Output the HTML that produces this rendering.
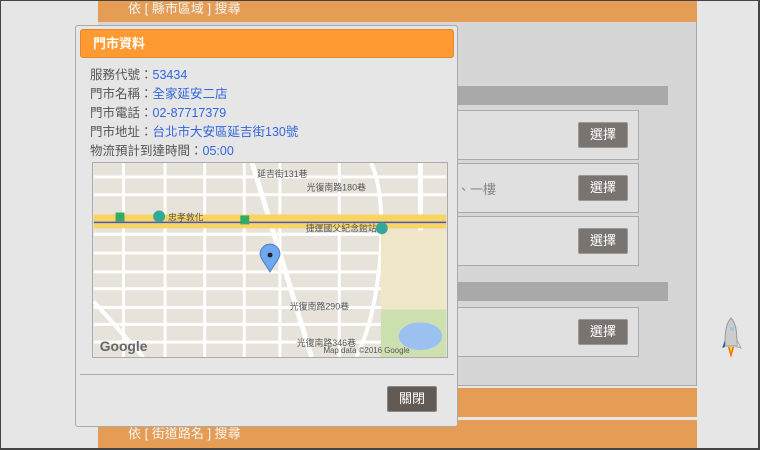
<!DOCTYPE html>
<html><head><meta charset="utf-8"><style>
*{margin:0;padding:0;box-sizing:border-box}
body{width:760px;height:450px;overflow:hidden;background:#e6e6e6;font-family:"Liberation Sans","Noto Sans CJK TC",sans-serif;position:relative}
.frame{position:absolute;left:0;top:0;width:760px;height:450px;border:1px solid #444;border-right-width:2px;border-bottom-width:2px;z-index:20;pointer-events:none}
.a{position:absolute}
.main{left:98px;top:0;width:599px;height:386px;background:#d6d6d6;border-right:1px solid #aaa;border-bottom:1px solid #aaa}
.ob{background:#e59d55;color:#f4f4f4;font-size:13px;padding-left:30px;line-height:20px;white-space:pre}
.gb{background:#a9a9a9;height:19px;left:457px;width:211px}
.row{left:440px;width:199px;height:50px;background:#e0e0e0;border:1px solid #aaa}
.btn{background:#79746f;color:#fff;font-size:13px;text-align:center;line-height:24px;border-radius:2px;border:1px solid #999;width:50px;height:26px;left:578px}
.modal{left:75px;top:25px;width:383px;height:402px;background:#e6e6e6;border:1px solid #aaa;border-radius:3px}
.mh{left:4px;top:3px;width:374px;height:29px;background:#ff9a33;border:1px solid #e08a30;border-radius:3px;color:#fff;font-weight:bold;font-size:13px;line-height:28px;padding-left:12px}
.info{left:14px;top:40px;font-size:12.5px;color:#555;line-height:19px}
.info b{font-weight:normal;color:#3366dd}
</style></head><body>
<div class="a main"></div>
<div class="a ob" style="left:98px;top:0;width:599px;height:22px;line-height:18px">依 [ 縣市區域 ] 搜尋</div>
<div class="a gb" style="top:86px"></div>
<div class="a row" style="top:110px"></div>
<div class="a row" style="top:163px"><span class="a" style="left:16px;top:15px;font-size:13px;color:#888">、一樓</span></div>
<div class="a row" style="top:216px"></div>
<div class="a gb" style="top:282px"></div>
<div class="a row" style="top:307px"></div>
<div class="a btn" style="top:122px">選擇</div>
<div class="a btn" style="top:175px">選擇</div>
<div class="a btn" style="top:228px">選擇</div>
<div class="a btn" style="top:319px">選擇</div>
<div class="a ob" style="left:98px;top:388px;width:599px;height:29px"></div>
<div class="a ob" style="left:98px;top:420px;width:599px;height:30px;line-height:28px">依 [ 街道路名 ] 搜尋</div>
<svg class="a" style="left:720px;top:316px" width="22" height="48" viewBox="0 0 22 48"><path d="M11 2 C6 8 5 14 5 30 L17 30 C17 14 16 8 11 2Z" fill="#ccc" stroke="#999"/><circle cx="12" cy="13" r="2" fill="#9cd"/><path d="M5 24 L2 32 L5 31Z" fill="#3366aa"/><path d="M17 24 L21 32 L17 31Z" fill="#ddd" stroke="#aaa"/><path d="M8 31 L11 42 L14 31Z" fill="#f60"/><path d="M9.5 31 L11 37 L12.5 31Z" fill="#fd0"/></svg>
<div class="a modal">
<div class="a mh">門市資料</div>
<div class="a info">服務代號：<b>53434</b><br>門市名稱：<b>全家延安二店</b><br>門市電話：<b>02-87717379</b><br>門市地址：<b>台北市大安區延吉街130號</b><br>物流預計到達時間：<b>05:00</b></div>
<svg class="a" style="left:16px;top:136px;border:1px solid #aaa" width="356" height="196" viewBox="0 0 356 196">
<rect width="356" height="196" fill="#e8e3da"/>
<g stroke="#fff" stroke-width="3" fill="none">
<path d="M0 14H356M0 32H356M0 72H356M0 91H356M0 110H356M0 127H356M0 146H356M0 163H356M0 181H356"/>
<path d="M30 0V196M72 0V196M112 0V196M152 0V196M188 0V196M248 0V196"/>
<path d="M330 0V196" stroke-width="5"/>
<path d="M160 0L220 196" stroke-width="5"/>
<path d="M280 0C300 40 290 150 265 196" stroke-width="4"/>
<path d="M0 140L50 196" stroke-width="4"/>
</g>
<rect x="290" y="68" width="66" height="80" fill="#f0e6c8"/>
<rect x="290" y="148" width="66" height="48" fill="#cde0b0"/>
<ellipse cx="330" cy="175" rx="22" ry="14" fill="#9cc0f0"/>
<rect x="0" y="52" width="356" height="14" fill="#f8d462"/>
<line x1="0" y1="60" x2="356" y2="60" stroke="#4455cc" stroke-width="1.5"/>
<circle cx="66" cy="54" r="6" fill="#3a9"/><circle cx="291" cy="66" r="6" fill="#3a9"/>
<rect x="22" y="50" width="9" height="9" fill="#3a6"/><rect x="148" y="53" width="9" height="9" fill="#3a6"/>
<g font-size="9" fill="#555" font-family="Liberation Sans,Noto Sans CJK TC,sans-serif"><text x="165" y="14">延吉街131巷</text><text x="215" y="28">光復南路180巷</text><text x="75" y="58">忠孝敦化</text><text x="214" y="69">捷運國父紀念館站</text><text x="198" y="148">光復南路290巷</text><text x="205" y="185">光復南路346巷</text><text x="232" y="192" font-size="8">Map data ©2016 Google</text><text x="6" y="190" font-size="14" font-weight="bold" fill="#666">Google</text></g>
<path d="M178 110 C172 100 168 96 168 92 A10 10 0 0 1 188 92 C188 96 184 100 178 110Z" fill="#6fa8ee" stroke="#4a7cc0"/><circle cx="178" cy="93" r="2.5" fill="#223"/>
</svg>
<div class="a" style="left:4px;top:348px;width:374px;height:1px;background:#aaa"></div>
<div class="a" style="left:311px;top:360px;width:50px;height:26px;background:#625b55;border:1px solid #888;border-radius:2px;color:#fff;font-size:13px;text-align:center;line-height:24px">關閉</div>
</div>
<div class="frame"></div>
</body></html>
